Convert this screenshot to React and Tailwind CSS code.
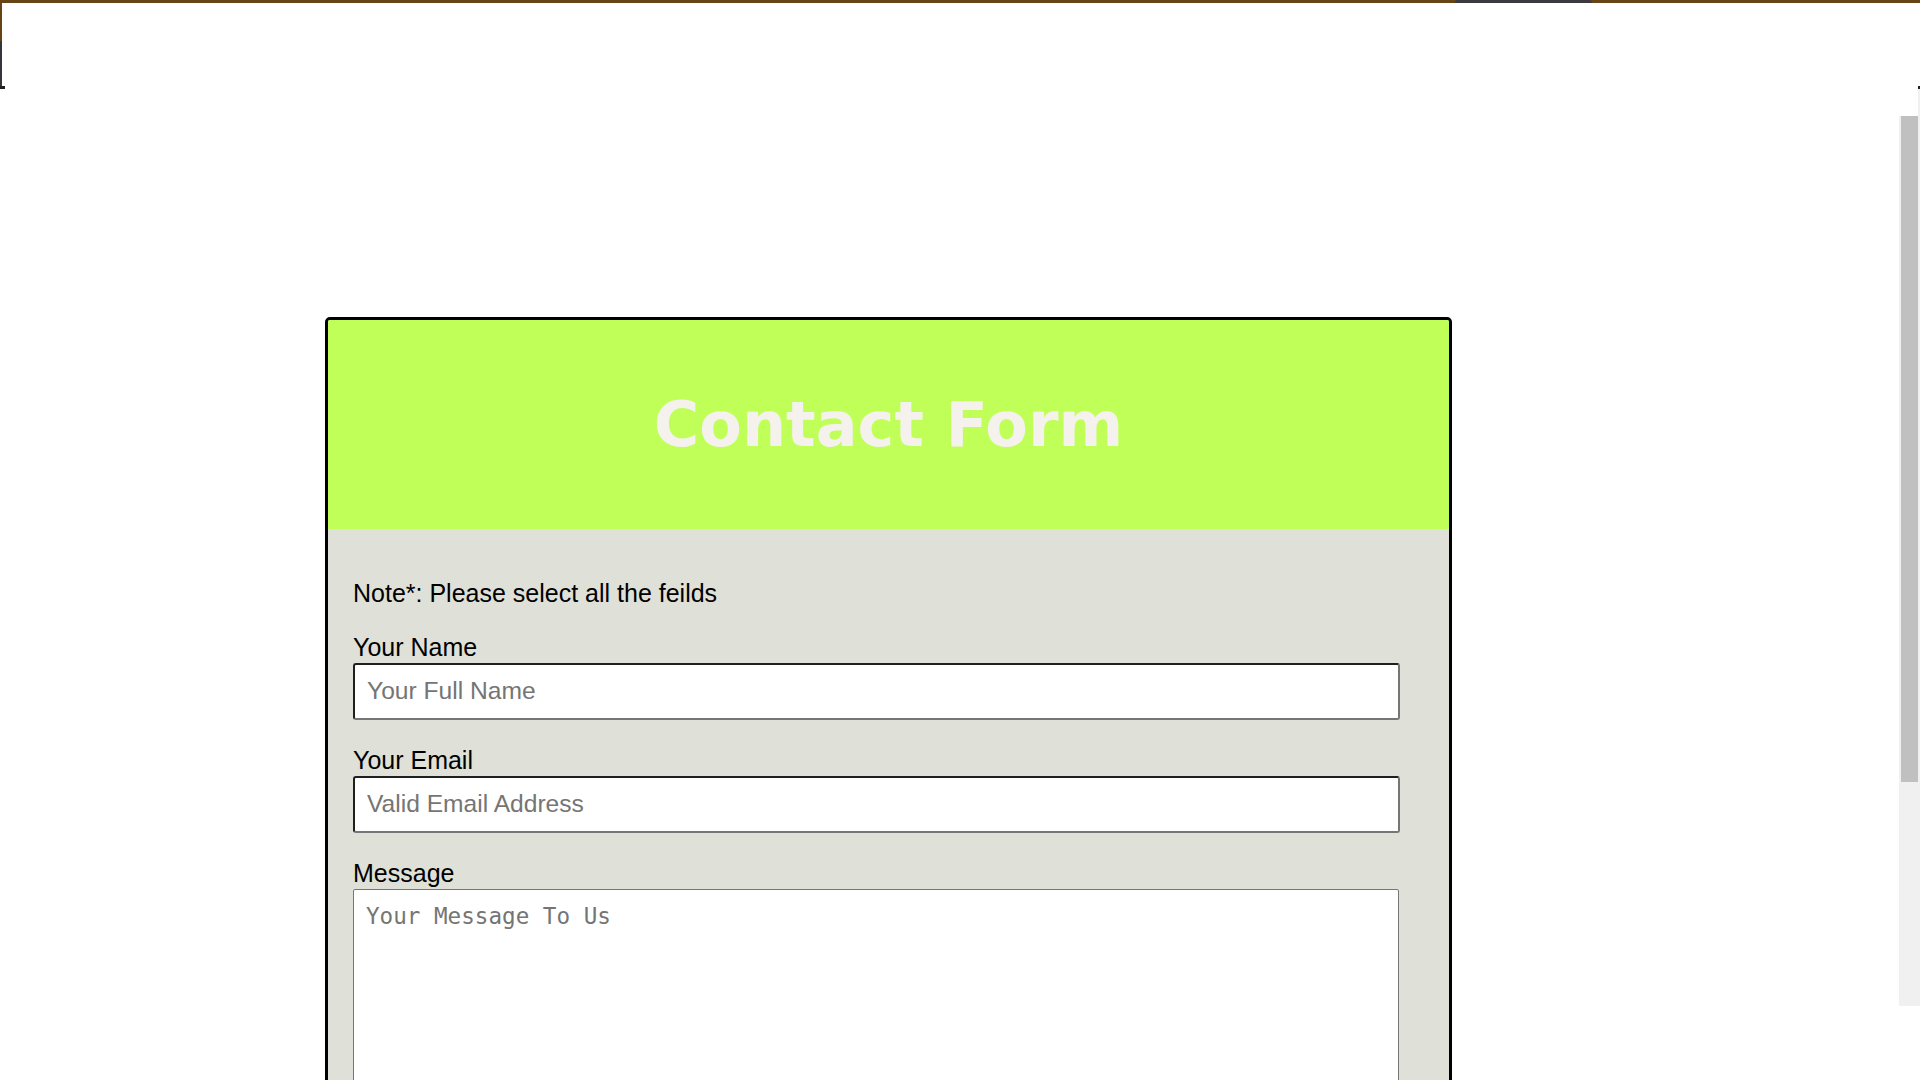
export default function App() {
  return (
    <div className="flex h-[1080px] w-full flex-col overflow-hidden bg-white font-['Liberation_Sans',Arial,sans-serif]">
      {/* window top edge */}
      <div className="flex h-[3px] shrink-0 bg-[#664416]">
        <div className="ml-[1455px] h-full w-[137px] rounded-t-[3px] bg-[#3a3a40]" />
      </div>

      <div className="flex min-h-0 flex-1">
        {/* left edge */}
        <div className="flex w-[5px] shrink-0 flex-col">
          <div className="h-[38px] w-[2px] bg-[#664416]" />
          <div className="h-[45px] w-[2px] bg-[#35353d]" />
          <div className="h-[3px] w-[5px] bg-[#222]" />
        </div>

        <main className="flex-1 pl-[320px] pt-[314px]">
          <div className="w-[1127px] overflow-hidden rounded-[5px] border-[3px] border-black">
            <div className="flex h-[209px] items-center justify-center bg-[#bfff58]">
              <h1 className="font-['DejaVu_Sans',Verdana,sans-serif] text-[62px] font-bold leading-none text-[#f5f1ed]">
                Contact Form
              </h1>
            </div>
            <form className="h-[700px] bg-[#dfe0d8] pl-[25px] pt-[50px] text-black">
              <p className="text-[25px] leading-[28px]">Note*: Please select all the feilds</p>

              <label className="mt-[26px] block text-[25px] leading-[28px]">Your Name</label>
              <input
                className="mt-[1.6px] block h-[57px] w-[1047px] rounded-[3px] border-2 border-b-[#767676] border-l-[#1f1f1f] border-r-[#767676] border-t-[#1f1f1f] bg-white px-[12px] text-[24.6px] outline-none placeholder:text-[#757575]"
                placeholder="Your Full Name"
              />

              <label className="mt-[26.7px] block text-[25px] leading-[28px]">Your Email</label>
              <input
                className="mt-[1.3px] block h-[57px] w-[1047px] rounded-[3px] border-2 border-b-[#767676] border-l-[#1f1f1f] border-r-[#767676] border-t-[#1f1f1f] bg-white px-[12px] text-[24.6px] outline-none placeholder:text-[#757575]"
                placeholder="Valid Email Address"
              />

              <label className="mt-[26.7px] block text-[25px] leading-[28px]">Message</label>
              <textarea
                className="mt-[1.3px] block h-[300px] w-[1046px] resize-none rounded-[2px] border border-[#767676] bg-white pl-[12px] pt-[10px] font-['DejaVu_Sans_Mono',monospace] text-[22.6px] outline-none placeholder:text-[#757575]"
                placeholder="Your Message To Us"
              />
            </form>
          </div>
        </main>

        {/* scrollbar */}
        <div className="flex w-[21px] shrink-0">
          <div className="flex w-[19px] flex-col">
            <div className="h-[113px]" />
            <div className="h-[890px] bg-[#f0f0f0] pl-[2px]">
              <div className="h-[666px] w-[17px] bg-[#c0c0c0]" />
            </div>
          </div>
          <div className="flex w-[2px] flex-col">
            <div className="h-[83px]" />
            <div className="h-[3px] bg-[#222]" />
            <div className="h-[917px] bg-[#f0f0f0]" />
          </div>
        </div>
      </div>
    </div>
  );
}
